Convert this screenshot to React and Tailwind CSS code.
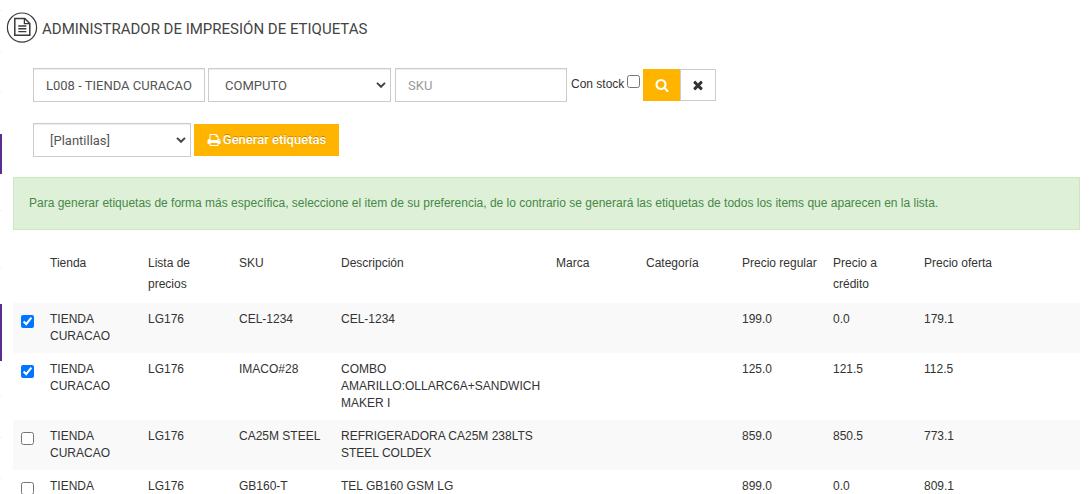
import { useState } from 'react';

const COLUMNS = [
    { label: 'Tienda', width: 'w-[98px]' },
    { label: 'Lista de precios', width: 'w-[91px]' },
    { label: 'SKU', width: 'w-[102px]' },
    { label: 'Descripción', width: 'w-[215px]' },
    { label: 'Marca', width: 'w-[90px]' },
    { label: 'Categoría', width: 'w-[96px]' },
    { label: 'Precio regular', width: 'w-[91px]' },
    { label: 'Precio a crédito', width: 'w-[91px]' },
    { label: 'Precio oferta', width: 'w-auto' },
];

const ITEMS = [
    { sku: 'CEL-1234', name: 'CEL-1234', regular: '199.0', credit: '0.0', offer: '179.1' },
    { sku: 'IMACO#28', name: 'COMBO AMARILLO:OLLARC6A+SANDWICH MAKER I', regular: '125.0', credit: '121.5', offer: '112.5' },
    { sku: 'CA25M STEEL', name: 'REFRIGERADORA CA25M 238LTS STEEL COLDEX', regular: '859.0', credit: '850.5', offer: '773.1' },
    { sku: 'GB160-T', name: 'TEL GB160 GSM LG', regular: '899.0', credit: '0.0', offer: '809.1' },
];

/* Collapsed side menu: only its right edge is visible. */
const RAIL = [
    'h-[10px]',
    'h-[41px] border-t border-[#f3f3f3]',
    'h-[41px] border-t border-[#f3f3f3]',
    'h-[42px] border-t border-[#f3f3f3]',
    'h-[40px] bg-[#5c2d91]',
    'h-[36px]',
    'h-[57px] border-t border-[#f3f3f3]',
    'h-[37px] border-t border-[#f3f3f3]',
    'h-[57px] bg-[#5c2d91]',
    'h-[35px]',
    'h-[41px] border-t border-[#f3f3f3]',
    'h-[41px] border-t border-[#f3f3f3]',
    'h-[16px] border-t border-[#f3f3f3]',
];

const ICONS = {
    print: 'M448 1536h896v-256H448v256zm0-640h896V512h-160q-40 0-68-28t-28-68V256H448v640zm1152 64q0-26-19-45t-45-19-45 19-19 45 19 45 45 19 45-19 19-45zm128 0v416q0 13-9.5 22.5t-22.5 9.5h-224v160q0 40-28 68t-68 28H416q-40 0-68-28t-28-68v-160H96q-13 0-22.5-9.5T64 1376V960q0-79 56.5-135.5T256 768h64V224q0-40 28-68t68-28h672q40 0 88 20t76 48l152 152q28 28 48 76t20 88v256h64q79 0 135.5 56.5T1728 960z',
    search: 'M1216 832q0-185-131.5-316.5T768 384 451.5 515.5 320 832t131.5 316.5T768 1280t316.5-131.5T1216 832zm512 832q0 52-38 90t-90 38q-54 0-90-38l-343-342q-179 124-399 124-143 0-273.5-55.5t-225-150-150-225T64 832t55.5-273.5 150-225 225-150T768 128t273.5 55.5 225 150 150 225T1472 832q0 220-124 399l343 343q37 37 37 90z',
    times: 'M1490 1322q0 40-28 68l-136 136q-28 28-68 28t-68-28l-294-294-294 294q-28 28-68 28t-68-28l-136-136q-28-28-28-68t28-68l294-294-294-294q-28-28-28-68t28-68l136-136q28-28 68-28t68 28l294 294 294-294q28-28 68-28t68 28l136 136q28 28 28 68t-28 68l-294 294 294 294q28 28 28 68z',
};

const FIELD = 'h-[34px] border border-[#ccc] bg-white font-[Roboto,sans-serif] text-[13px] text-[#555] shadow-[inset_0_1px_1px_rgba(0,0,0,0.075)] outline-none';

const CELL = 'p-2';

function Icon({ name }) {
    return (
        <svg viewBox="0 0 1792 1792" className="h-[14px] w-[14px] shrink-0" fill="currentColor" aria-hidden="true">
            <path d={ICONS[name]} />
        </svg>
    );
}

function Select({ label, value, width }) {
    return (
        <span className={`relative inline-flex ${width}`}>
            <select aria-label={label} defaultValue={value} className={`${FIELD} w-full appearance-none pt-[2px] pr-6 pl-4`}>
                <option>{value}</option>
            </select>
            <svg viewBox="0 0 10 6" className="pointer-events-none absolute top-[14px] right-[5px] h-[6px] w-[10px]" fill="none" stroke="#444" strokeWidth="2">
                <path d="M1 .9 5 4.8 9 .9" />
            </svg>
        </span>
    );
}

function Header() {
    return (
        <header className="flex items-center gap-1 pl-1">
            <svg viewBox="0 0 32 32" className="h-8 w-8 shrink-0" fill="none" stroke="#3a3a3a" aria-hidden="true">
                <circle cx="16" cy="15.6" r="14.6" strokeWidth="1.2" />
                <path d="M8.8 6.5h10l5 5v11.8h-15z" strokeWidth="1.5" />
                <path d="M18.4 6.5v5.2h5.2" strokeWidth="1.3" />
                <path d="M12.3 14h8M12.3 16.8h8M12.3 19.6h8" strokeWidth="1.4" />
            </svg>
            <h1 className="pt-[2px] font-[Roboto,sans-serif] text-[15px] leading-5 text-[#444]">ADMINISTRADOR DE IMPRESIÓN DE ETIQUETAS</h1>
        </header>
    );
}

function Filters() {
    return (
        <form className="mt-6 pl-[31px]" onSubmit={(e) => e.preventDefault()}>
            <div className="flex items-center">
                <input aria-label="Tienda" defaultValue="L008 - TIENDA CURACAO" className={`${FIELD} w-[172px] px-3`} />
                <span className="ml-[3px] flex">
                    <Select label="Categoría" value="COMPUTO" width="w-[183px]" />
                </span>
                <input aria-label="SKU" placeholder="SKU" className={`${FIELD} ml-1 w-[172px] px-3 placeholder:text-[#999]`} />
                <label htmlFor="stock" className="ml-1 pb-[2px] text-[12px] leading-5">Con stock</label>
                <input id="stock" type="checkbox" className="mb-2 ml-[3px] h-[13px] w-[13px]" />
                <button type="submit" aria-label="Buscar" className="ml-[3px] flex h-8 w-[37px] items-center justify-center bg-[#ffb400] text-white">
                    <Icon name="search" />
                </button>
                <button type="reset" aria-label="Limpiar" className="flex h-8 w-[36px] items-center justify-center border border-[#ccc] bg-white text-[#333]">
                    <Icon name="times" />
                </button>
            </div>
            <div className="mt-[21px] flex items-center gap-[3px]">
                <Select label="Plantilla" value="[Plantillas]" width="w-[158px]" />
                <button type="button" className="flex h-8 w-[145px] items-center justify-center gap-[2px] bg-[#ffb400] font-[Roboto,sans-serif] text-[13px] font-medium text-white [text-shadow:0_-1px_0_rgba(0,0,0,0.25)]">
                    <Icon name="print" />
                    Generar etiquetas
                </button>
            </div>
        </form>
    );
}

function ItemsTable() {
    const [checked, setChecked] = useState([true, true, false, false]);

    const toggle = (i) => setChecked(checked.map((c, n) => (n === i ? !c : c)));

    return (
        <table className="mt-[14px] w-full table-fixed border-collapse text-left text-[12px]">
            <thead>
                <tr>
                    <th className="w-[29px]" aria-label="Seleccionar" />
                    {COLUMNS.map((col) => (
                        <th key={col.label} className={`${col.width} px-2 pt-[9px] pb-2 align-top leading-[21px] font-normal`}>
                            {col.label}
                        </th>
                    ))}
                </tr>
            </thead>
            <tbody className="leading-[17px]">
                {ITEMS.map((item, i) => (
                    <tr key={item.sku} className="align-top odd:bg-[#f9f9f9]">
                        <td className="pt-3 pl-2">
                            <input
                                type="checkbox"
                                aria-label={`Seleccionar ${item.sku}`}
                                checked={checked[i]}
                                onChange={() => toggle(i)}
                                className="block h-[13px] w-[13px]"
                            />
                        </td>
                        <td className={CELL}>TIENDA CURACAO</td>
                        <td className={CELL}>LG176</td>
                        <td className={CELL}>{item.sku}</td>
                        <td className={CELL}>{item.name}</td>
                        <td />
                        <td />
                        <td className={CELL}>{item.regular}</td>
                        <td className={CELL}>{item.credit}</td>
                        <td className={CELL}>{item.offer}</td>
                    </tr>
                ))}
            </tbody>
        </table>
    );
}

export default function App() {
    return (
        <div className="flex h-screen overflow-hidden bg-white font-['Liberation_Sans',Arial,sans-serif] text-[#333]">
            <aside className="w-[2px] shrink-0">
                {RAIL.map((cls, i) => (
                    <div key={i} className={cls} />
                ))}
            </aside>
            <main className="min-w-0 flex-1 pt-3">
                <Header />
                <Filters />
                <section className="mt-5 pr-[9px] pl-[11px]">
                    <p className="border border-[#d0e6be] bg-[#dff0d8] p-[15px] text-[12px] leading-[21px] text-[#468847]">
                        Para generar etiquetas de forma más específica, seleccione el item de su preferencia, de lo contrario se generará las etiquetas de todos los items que aparecen en la lista.
                    </p>
                    <ItemsTable />
                </section>
            </main>
        </div>
    );
}
